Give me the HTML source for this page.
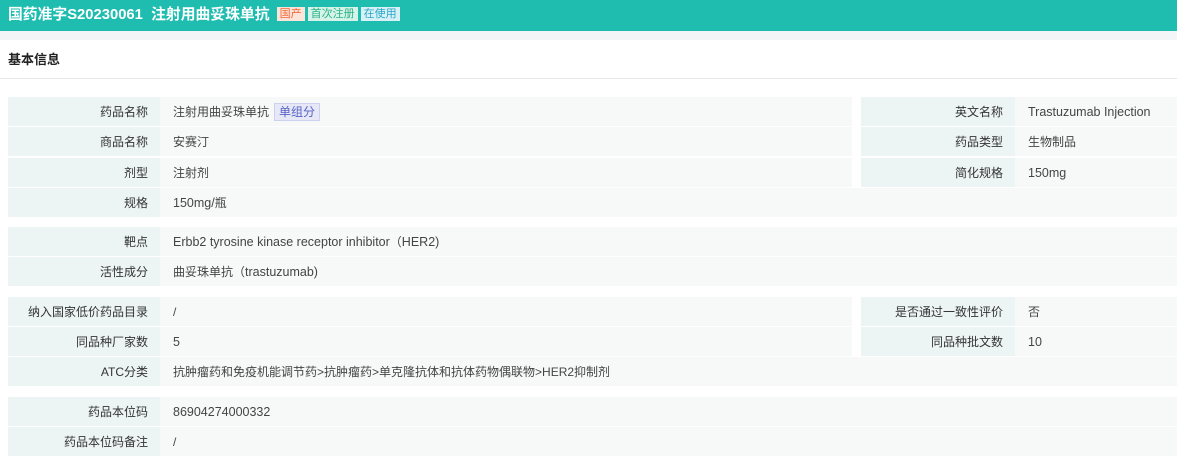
<!DOCTYPE html>
<html><head><meta charset="utf-8"><style>
*{margin:0;padding:0;box-sizing:border-box}
body{width:1177px;height:465px;overflow:hidden;background:#fff;font-family:"Liberation Sans","Noto Sans CJK SC",sans-serif;font-size:12px;color:#333}
.hd{position:absolute;left:0;top:0;width:1177px;height:31px;background:#1fbdb0;color:#fff;font-weight:bold;font-size:14.8px;line-height:31px;padding-left:8px}
.tag{display:inline-block;font-size:11px;font-weight:normal;line-height:14px;padding:0 3px;vertical-align:2px;margin-left:3px}
.strip{position:absolute;left:0;top:31px;width:1177px;height:9px;background:#f4f5f7}
.tt{position:absolute;left:8px;top:49px;font-size:13px;font-weight:bold;color:#222}
.ln{position:absolute;left:0;top:78px;width:1177px;height:1px;background:#e6e6e6}
.l,.v{position:absolute;height:29px;line-height:30px}
.l{background:#edf4f4;text-align:right;padding-right:12px;color:#333}
.v{background:#f7f9f9;padding-left:13px;color:#444}
.e{font-size:12.5px}
.bd{display:inline-block;background:#e6e8f8;border:1px solid #cdd1f0;color:#5a62c4;line-height:16px;padding:0 4px;margin-left:5px}
</style></head><body>
<div class="hd">国药准字S20230061&nbsp; 注射用曲妥珠单抗 <span class="tag" style="background:#fde4d8;color:#f26a3d;margin-left:3px">国产</span><span class="tag" style="background:#d6f3e9;color:#2bb487">首次注册</span><span class="tag" style="background:#d7f1f7;color:#2aa7c9">在使用</span></div>
<div class="strip"></div>
<div class="tt">基本信息</div>
<div class="ln"></div>

<div class="l" style="left:8px;top:97px;width:152px">药品名称</div><div class="v" style="left:160px;top:97px;width:692px">注射用曲妥珠单抗<span class="bd">单组分</span></div>
<div class="l" style="left:861px;top:97px;width:154px">英文名称</div><div class="v e" style="left:1015px;top:97px;width:162px">Trastuzumab Injection</div>
<div class="l" style="left:8px;top:127px;width:152px">商品名称</div><div class="v" style="left:160px;top:127px;width:692px">安赛汀</div>
<div class="l" style="left:861px;top:127px;width:154px">药品类型</div><div class="v" style="left:1015px;top:127px;width:162px">生物制品</div>
<div class="l" style="left:8px;top:158px;width:152px">剂型</div><div class="v" style="left:160px;top:158px;width:692px">注射剂</div>
<div class="l" style="left:861px;top:158px;width:154px">简化规格</div><div class="v e" style="left:1015px;top:158px;width:162px">150mg</div>
<div class="l" style="left:8px;top:188px;width:152px">规格</div><div class="v" style="left:160px;top:188px;width:1017px"><span class="e">150mg/</span>瓶</div>

<div class="l" style="left:8px;top:227px;width:152px">靶点</div><div class="v e" style="left:160px;top:227px;width:1017px">Erbb2 tyrosine kinase receptor inhibitor<span style="font-size:12px">（</span>HER2)</div>
<div class="l" style="left:8px;top:257px;width:152px">活性成分</div><div class="v" style="left:160px;top:257px;width:1017px">曲妥珠单抗（<span class="e">trastuzumab)</span></div>

<div class="l" style="left:8px;top:297px;width:152px">纳入国家低价药品目录</div><div class="v" style="left:160px;top:297px;width:692px">/</div>
<div class="l" style="left:861px;top:297px;width:154px">是否通过一致性评价</div><div class="v" style="left:1015px;top:297px;width:162px">否</div>
<div class="l" style="left:8px;top:327px;width:152px">同品种厂家数</div><div class="v e" style="left:160px;top:327px;width:692px">5</div>
<div class="l" style="left:861px;top:327px;width:154px">同品种批文数</div><div class="v e" style="left:1015px;top:327px;width:162px">10</div>
<div class="l" style="left:8px;top:357px;width:152px">ATC分类</div><div class="v" style="left:160px;top:357px;width:1017px">抗肿瘤药和免疫机能调节药&gt;抗肿瘤药&gt;单克隆抗体和抗体药物偶联物&gt;HER2抑制剂</div>

<div class="l" style="left:8px;top:397px;width:152px">药品本位码</div><div class="v e" style="left:160px;top:397px;width:1017px">86904274000332</div>
<div class="l" style="left:8px;top:427px;width:152px">药品本位码备注</div><div class="v" style="left:160px;top:427px;width:1017px">/</div>
</body></html>
